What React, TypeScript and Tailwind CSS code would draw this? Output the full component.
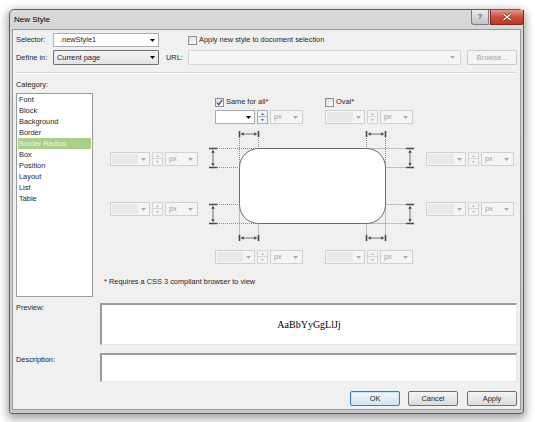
import React from "react";

function DropArrow({ color }: { color: string }) {
  return (
    <svg width="5" height="3" viewBox="0 0 5 3" className="block shrink-0">
      <path d="M0 0H5L2.5 3Z" fill={color} />
    </svg>
  );
}

function Spinner({ enabled }: { enabled: boolean }) {
  const box = enabled
    ? "h-[7px] border border-[#a7adb5] bg-[#f1f3f6] flex items-center justify-center"
    : "h-[7px] border border-[#d6d6d6] bg-[#f3f3f3] flex items-center justify-center";
  const c = enabled ? "#2f5d96" : "#b9b9b9";
  return (
    <div className="w-[11px] h-[14px] flex flex-col">
      <div className={box}>
        <svg width="3" height="2" viewBox="0 0 3 2" className="block">
          <path d="M0 2H3L1.5 0Z" fill={c} />
        </svg>
      </div>
      <div className={box + " border-t-0"}>
        <svg width="3" height="2" viewBox="0 0 3 2" className="block">
          <path d="M0 0H3L1.5 2Z" fill={c} />
        </svg>
      </div>
    </div>
  );
}

function UnitGroup({ enabled }: { enabled?: boolean }) {
  return (
    <div className="flex items-center gap-[2px]">
      {enabled ? (
        <div className="w-[40px] h-[14px] border border-[#a5abb3] bg-white flex items-center justify-end pr-[3px]">
          <DropArrow color="#000" />
        </div>
      ) : (
        <div className="w-[40px] h-[14px] border border-[#d0d0d0] bg-[#f5f5f5] flex items-center p-px">
          <div className="w-[26px] h-full bg-[#e9e9e9]" />
          <div className="flex-1 flex justify-center">
            <DropArrow color="#ababab" />
          </div>
        </div>
      )}
      <Spinner enabled={!!enabled} />
      <div className="w-[33px] h-[14px] border border-[#d0d0d0] bg-[#f5f5f5] flex items-center justify-between pl-[3px] pr-[4px] text-[#9d9d9d]">
        <span className="leading-none">px</span>
        <DropArrow color="#ababab" />
      </div>
    </div>
  );
}

function Checkbox({ checked }: { checked?: boolean }) {
  return (
    <div className="w-[9px] h-[9px] shrink-0 border border-[#8f8f8f] bg-linear-to-br from-[#dedede] to-[#fbfbfb] flex items-center justify-center">
      {checked && (
        <svg width="7" height="7" viewBox="0 0 7 7" className="block">
          <path d="M1 3.6L2.8 5.7L6.2 0.8" stroke="#2d4c80" strokeWidth="1.2" fill="none" />
        </svg>
      )}
    </div>
  );
}

function Btn({ label, def }: { label: string; def?: boolean }) {
  return (
    <div
      className={
        def
          ? "w-[50px] h-[15px] rounded-[2px] border border-[#3c7fb1] bg-linear-to-b from-[#f2f7fb] to-[#d6e4ee] shadow-[inset_0_0_0_1px_#c4e6f8] flex items-center justify-center"
          : "w-[50px] h-[15px] rounded-[2px] border border-[#707070] bg-linear-to-b from-[#f4f4f4] to-[#dcdcdc] flex items-center justify-center"
      }
    >
      {label}
    </div>
  );
}

function HArrow({ x1, x2, y }: { x1: number; x2: number; y: number }) {
  return (
    <g>
      <path d={`M${x1} ${y - 3}V${y + 3}M${x2} ${y - 3}V${y + 3}`} stroke="#454545" strokeWidth="1.6" />
      <path d={`M${x1 + 3} ${y}H${x2 - 3}`} stroke="#505050" strokeWidth="0.8" />
      <path d={`M${x1 + 1.2} ${y}l3 -1.7v3.4Z M${x2 - 1.2} ${y}l-3 -1.7v3.4Z`} fill="#454545" />
    </g>
  );
}

function VArrow({ x, y1, y2 }: { x: number; y1: number; y2: number }) {
  return (
    <g>
      <path d={`M${x - 4} ${y1}H${x + 4}M${x - 4} ${y2}H${x + 4}`} stroke="#454545" strokeWidth="1.6" />
      <path d={`M${x} ${y1 + 3}V${y2 - 3}`} stroke="#505050" strokeWidth="0.8" />
      <path d={`M${x} ${y1 + 1.2}l-1.7 3h3.4Z M${x} ${y2 - 1.2}l-1.7 -3h3.4Z`} fill="#454545" />
    </g>
  );
}

function Diagram() {
  return (
    <svg width="226" height="122" viewBox="0 0 226 122" className="block mt-[2px]">
      <g stroke="#8c8c8c" strokeWidth="1" strokeDasharray="1 1" fill="none">
        <path d="M59.5 8V22.5 M40.5 11V41.5 M167.5 8V22.5 M186.5 11V41.5" />
        <path d="M14 22.5H59.5 M14 41.5H40.5 M167.5 22.5H211 M186.5 41.5H211" />
        <path d="M14 78.5H40.5 M14 97.5H59.5 M186.5 78.5H211 M167.5 97.5H211" />
        <path d="M59.5 97.5V112 M40.5 78.5V109 M167.5 97.5V112 M186.5 78.5V109" />
      </g>
      <rect x="40.5" y="22.5" width="146" height="75" rx="19" fill="#ffffff" stroke="#6b6b6b" />
      <HArrow x1={40.5} x2={59.5} y={8} />
      <HArrow x1={167.5} x2={186.5} y={8} />
      <HArrow x1={40.5} x2={59.5} y={112} />
      <HArrow x1={167.5} x2={186.5} y={112} />
      <VArrow x={14} y1={22.5} y2={41.5} />
      <VArrow x={14} y1={78.5} y2={97.5} />
      <VArrow x={211} y1={22.5} y2={41.5} />
      <VArrow x={211} y1={78.5} y2={97.5} />
    </svg>
  );
}

const categories = ["Font", "Block", "Background", "Border", "Border Radius", "Box", "Position", "Layout", "List", "Table"];

export default function App() {
  return (
    <div className="w-[535px] h-[422px] bg-white pt-[9px] pl-[9px] font-['Liberation_Sans',Arial,sans-serif] text-[7.4px] leading-[10px] text-[#1e1e1e]">
      <div className="w-[515px] h-[405px] border border-[#5f5f5f] rounded-t-[5px] rounded-b-[3px] bg-linear-to-b from-[#d6d8da] to-[#c6c8ca] shadow-[0_3px_9px_2px_rgba(0,0,0,0.35)] flex flex-col px-[2px] pb-[3px]">
        {/* Title bar */}
        <div className="h-[19px] shrink-0 flex items-start">
          <span className="pl-[2px] pt-[5px] text-[8px] leading-[10px] text-black">New Style</span>
          <div className="ml-auto mr-[-3px] flex gap-[1px]">
            <div className="w-[18px] h-[15px] border border-t-0 border-[#7c7c7c] rounded-bl-[3px] bg-linear-to-b from-[#ececec] to-[#c2c2c2] flex items-center justify-center text-[8px] font-bold text-[#606060]">
              ?
            </div>
            <div className="w-[34px] h-[15px] border border-t-0 border-[#7a2a20] rounded-br-[3px] bg-linear-to-b from-[#e39a8e] via-[#c9503c] to-[#b83a22] flex items-center justify-center">
              <svg width="10" height="8" viewBox="0 0 10 8" className="block">
                <path d="M1.5 1L8.5 7M8.5 1L1.5 7" stroke="#5a1a10" strokeWidth="2.6" />
                <path d="M1.5 1L8.5 7M8.5 1L1.5 7" stroke="#ffffff" strokeWidth="1.5" />
              </svg>
            </div>
          </div>
        </div>

        {/* Content */}
        <div className="flex-1 border border-[#9a9a9a] bg-[#f0f0f0] pl-[3px] pr-[3px] pt-[3px] flex flex-col">
          {/* Row 1 */}
          <div className="flex items-center h-[14px]">
            <span className="w-[37px]">Selector:</span>
            <div className="w-[106px] h-[14px] border border-[#abadb3] bg-white flex items-center justify-between pl-[6px] pr-[3px]">
              <span>.newStyle1</span>
              <DropArrow color="#000" />
            </div>
            <div className="ml-[29px] flex items-center gap-[2px]">
              <Checkbox />
              <span>Apply new style to document selection</span>
            </div>
          </div>

          {/* Row 2 */}
          <div className="flex items-center h-[15px] mt-[3px]">
            <span className="w-[37px]">Define in:</span>
            <div className="w-[106px] h-[15px] border border-[#707070] rounded-[1px] bg-linear-to-b from-[#f4f4f4] to-[#e4e4e4] flex items-center justify-between pl-[3px] pr-[3px]">
              <span>Current page</span>
              <DropArrow color="#000" />
            </div>
            <span className="ml-[7px] w-[22px]">URL:</span>
            <div className="w-[273px] h-[15px] border border-[#d6d6d6] bg-[#f5f5f5] flex items-center justify-end pr-[5px]">
              <DropArrow color="#b0b0b0" />
            </div>
            <div className="ml-[6px] w-[50px] h-[15px] border border-[#c9c9c9] rounded-[2px] bg-[#f4f4f4] flex items-center justify-center text-[#a3a3a3]">
              Browse...
            </div>
          </div>

          {/* Separator */}
          <div className="mt-[7px] border-t border-t-[#d5d5d5] border-b border-b-white" />

          <div className="mt-[6px] h-[10px]">Category:</div>

          {/* Main */}
          <div className="mt-[3px] flex gap-[7px] h-[204px]">
            <div className="w-[77px] h-[204px] border border-[#9c9c9c] bg-white px-px">
              {categories.map((c) => (
                <div
                  key={c}
                  className={
                    c === "Border Radius"
                      ? "h-[11px] leading-[11px] pl-[1px] bg-[#a9cf8a] text-[#eef5e6]"
                      : "h-[11px] leading-[11px] pl-[1px]"
                  }
                >
                  {c}
                </div>
              ))}
            </div>

            <div className="flex-1 flex flex-col">
              <div className="flex">
                <div className="w-[99px] pl-[10px] pt-[59px] flex flex-col gap-[36px]">
                  <UnitGroup />
                  <UnitGroup />
                </div>
                <div className="w-[226px] flex flex-col pt-[4px]">
                  <div className="flex h-[10px] items-center">
                    <div className="ml-[16px] w-[110px] flex items-center gap-[2px]">
                      <Checkbox checked />
                      <span>Same for all*</span>
                    </div>
                    <div className="flex items-center gap-[2px]">
                      <Checkbox />
                      <span>Oval*</span>
                    </div>
                  </div>
                  <div className="flex mt-[3px]">
                    <div className="ml-[16px] w-[110px]">
                      <UnitGroup enabled />
                    </div>
                    <UnitGroup />
                  </div>
                  <Diagram />
                  <div className="flex mt-[2px]">
                    <div className="ml-[16px] w-[110px]">
                      <UnitGroup />
                    </div>
                    <UnitGroup />
                  </div>
                </div>
                <div className="w-[92px] pl-[1px] pt-[59px] flex flex-col gap-[36px]">
                  <UnitGroup />
                  <UnitGroup />
                </div>
              </div>
              <div className="mt-[13px] pl-[4px]">* Requires a CSS 3 compliant browser to view</div>
            </div>
          </div>

          {/* Preview */}
          <div className="flex mt-[6px]">
            <div className="w-[84px]">Preview:</div>
            <div className="flex-1 h-[42px] border-t-2 border-l-2 border-t-[#9b9b9b] border-l-[#9b9b9b] border-b border-r border-b-[#e6e6e6] border-r-[#e6e6e6] bg-white flex items-center justify-center font-['Liberation_Serif',serif] text-[10px] text-black">
              AaBbYyGgLlJj
            </div>
          </div>

          {/* Description */}
          <div className="flex mt-[8px]">
            <div className="w-[84px] pt-[2px]">Description:</div>
            <div className="flex-1 h-[29px] border-t-2 border-l-2 border-t-[#9b9b9b] border-l-[#9b9b9b] border-b border-r border-b-[#e6e6e6] border-r-[#e6e6e6] bg-white" />
          </div>

          {/* Buttons */}
          <div className="flex justify-end mt-[9px]">
            <Btn label="OK" def />
            <div className="ml-[8px]">
              <Btn label="Cancel" />
            </div>
            <div className="ml-[9px]">
              <Btn label="Apply" />
            </div>
          </div>
        </div>
      </div>
    </div>
  );
}
